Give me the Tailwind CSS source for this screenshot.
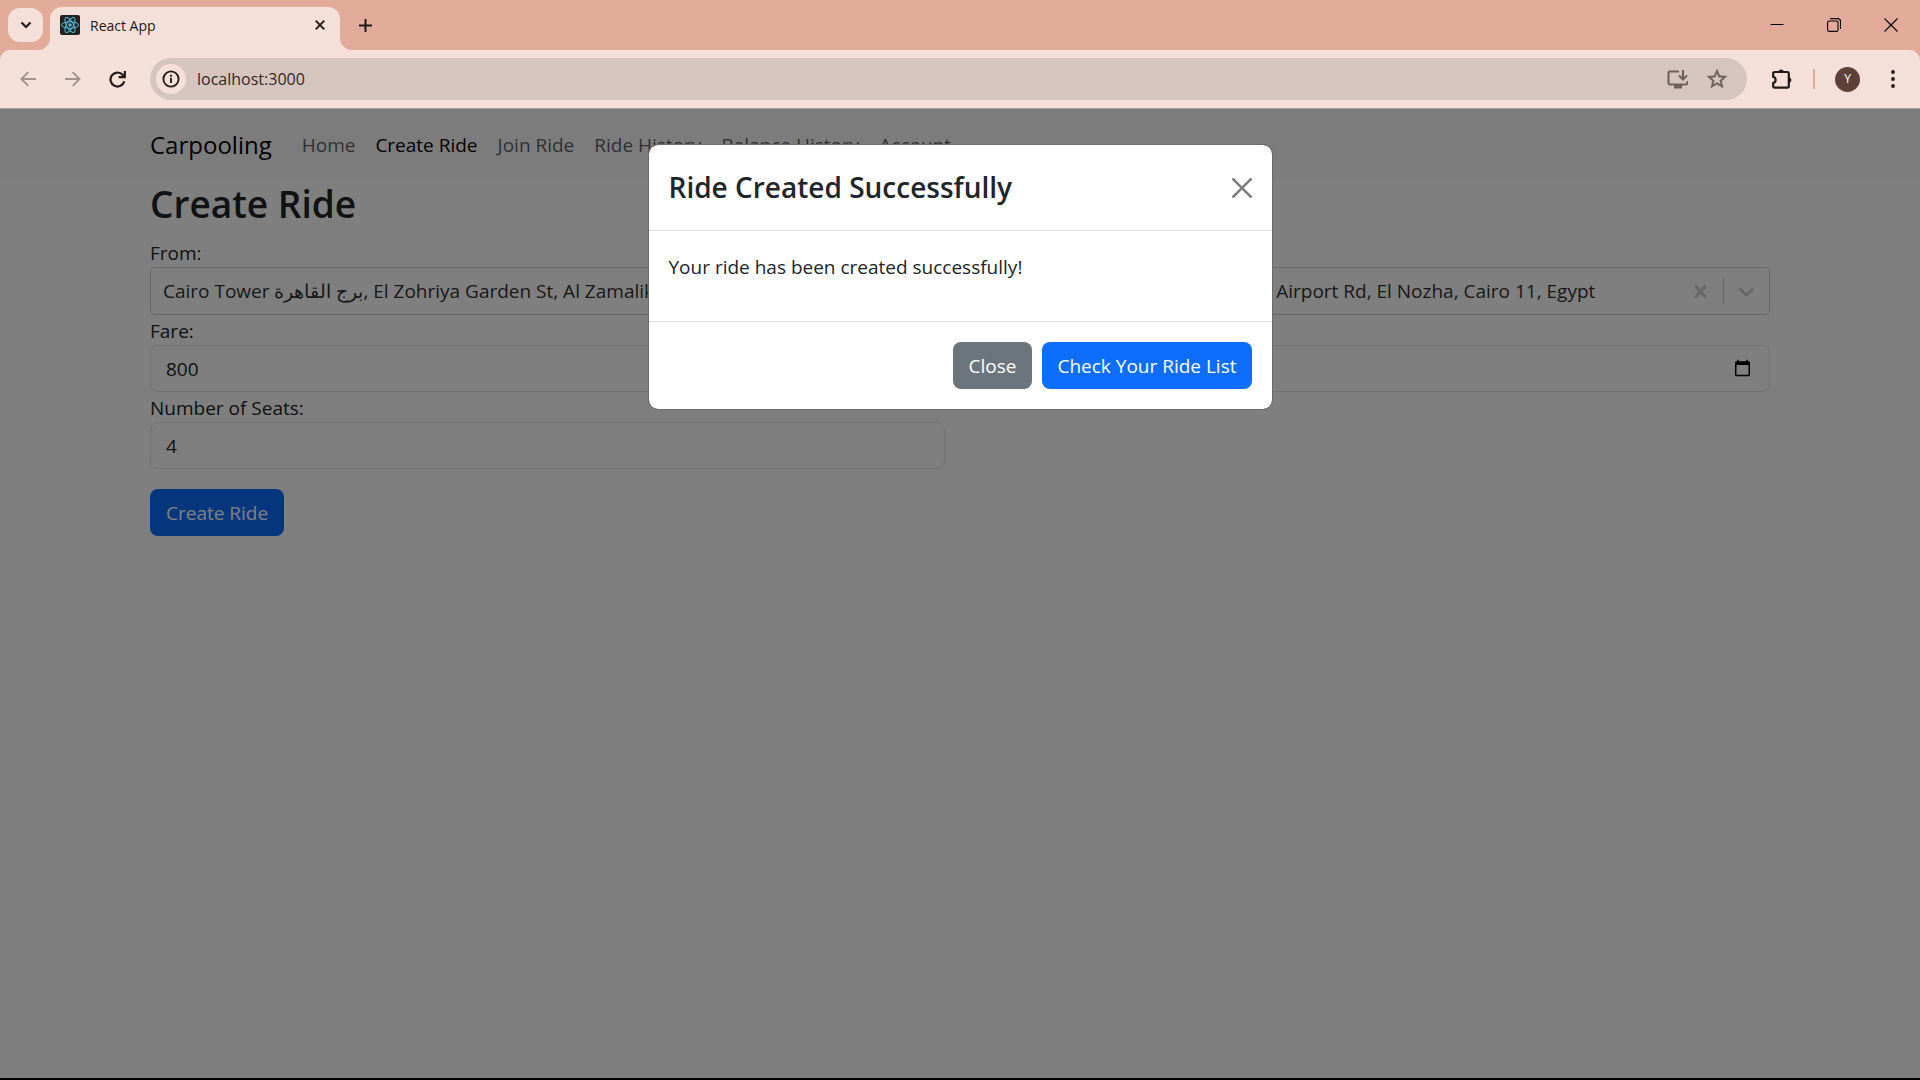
<!DOCTYPE html>
<html lang="en">
<head>
<meta charset="utf-8">
<meta name="viewport" content="width=device-width, initial-scale=1">
<title>React App</title>
<script src="https://cdn.jsdelivr.net/npm/@tailwindcss/browser@4"></script>
</head>
<body class="flex min-h-screen flex-col bg-[#e2ab99] font-['Open_Sans','Noto_Sans',sans-serif] text-[19px] leading-[30px] text-[#212529]">

<!-- Tab strip -->
<header class="flex h-[50px] shrink-0 text-[#1f1a19]">
  <button type="button" aria-label="Search tabs" class="mt-2 ml-2 flex h-[34px] w-[35px] items-center justify-center rounded-xl bg-[#f5e0d9]">
    <svg class="size-3" viewBox="0 0 12 12" fill="none" stroke="currentColor" stroke-width="2.2"><path d="M1.5 3.5 6 8l4.500-4.500"/></svg>
  </button>
  <div class="relative mt-[7px] ml-[7px] flex w-[290px] items-center rounded-t-xl bg-[#f5e0d9] px-[10px] pb-4">
    <svg class="absolute bottom-0 -left-3 size-3" viewBox="0 0 12 12" fill="#f5e0d9"><path d="M12 0v12H0A12 12 0 0 0 12 0z"/></svg>
    <svg class="absolute -right-3 bottom-0 size-3" viewBox="0 0 12 12" fill="#f5e0d9"><path d="M0 0v12h12A12 12 0 0 1 0 0z"/></svg>
    <svg class="mt-2 size-5" viewBox="0 0 20 20" fill="none" stroke="#53bdd9" stroke-width="1"><rect width="20" height="20" rx="2" fill="#222" stroke="none"/><ellipse cx="10" cy="10" rx="8.500" ry="3.300"/><ellipse cx="10" cy="10" rx="8.500" ry="3.300" transform="rotate(60 10 10)"/><ellipse cx="10" cy="10" rx="8.500" ry="3.300" transform="rotate(120 10 10)"/><circle cx="10" cy="10" r="1.700" fill="#53bdd9" stroke="none"/></svg>
    <span class="mt-[10px] ml-[10px] flex-1 text-sm">React App</span>
    <button type="button" aria-label="Close tab" class="mt-2 flex size-5 items-center justify-center">
      <svg class="size-[10px]" viewBox="0 0 10 10" fill="none" stroke="currentColor" stroke-width="1.900"><path d="m.7.700 8.600 8.600M9.300.700.700 9.300"/></svg>
    </button>
  </div>
  <button type="button" aria-label="New tab" class="ml-[10px] flex w-[30px] items-center justify-center">
    <svg class="size-[13px]" viewBox="0 0 13 13" fill="none" stroke="currentColor" stroke-width="2"><path d="M6.500 0v13M0 6.500h13"/></svg>
  </button>
  <div class="mr-px ml-auto flex text-black">
    <button type="button" aria-label="Minimize" class="flex w-[57px] items-center justify-center"><svg class="size-[14px]" viewBox="0 0 14 14" fill="none" stroke="currentColor"><path d="M.5 6.500h13"/></svg></button>
    <button type="button" aria-label="Restore" class="flex w-[57px] items-center justify-center"><svg class="size-[14px]" viewBox="0 0 14 14" fill="none" stroke="currentColor" stroke-width="1.100"><rect x=".6" y="3" width="10.400" height="10.400" rx="1.500"/><path d="M3 .6h7.500a3 3 0 0 1 3 3v7.400"/></svg></button>
    <button type="button" aria-label="Close window" class="flex w-[57px] items-center justify-center"><svg class="size-[14px]" viewBox="0 0 14 14" fill="none" stroke="currentColor" stroke-width="1.100"><path d="m.5.500 13 13M13.500.500l-13 13"/></svg></button>
  </div>
</header>

<!-- Toolbar -->
<div class="flex h-[58px] shrink-0 items-center rounded-t-[10px] bg-[#f5e0d9] pr-1 pl-[5px] text-[#1f1a19]">
  <button type="button" aria-label="Back" class="flex w-[45px] justify-center text-[#a0938e]"><svg class="size-[16px]" viewBox="0 0 16 16" fill="none" stroke="currentColor" stroke-width="1.900"><path d="M16 8H1.600M8.300 1.200 1.500 8l6.800 6.800"/></svg></button>
  <button type="button" aria-label="Forward" class="flex w-[45px] justify-center text-[#a0938e]"><svg class="size-[16px]" viewBox="0 0 16 16" fill="none" stroke="currentColor" stroke-width="1.900"><path d="M0 8h14.400M7.700 1.200 14.500 8l-6.800 6.800"/></svg></button>
  <button type="button" aria-label="Reload" class="flex w-[45px] justify-center"><svg class="size-[17px]" viewBox="0 0 17 17" fill="none" stroke="currentColor" stroke-width="2.200"><path d="M15.300 10.300A7 7 0 1 1 13.600 3.700L15.500 5.600"/><path d="M15.800 0v6.200H9.600"/></svg></button>
  <div class="ml-[10px] flex h-[42px] min-w-0 flex-1 items-center rounded-full bg-[#d6c5bf] pr-5 pl-[6px]">
    <button type="button" aria-label="View site information" class="flex size-[30px] items-center justify-center rounded-full bg-[#f5e0d9]"><svg class="size-[18px]" viewBox="0 0 18 18" fill="none" stroke="currentColor" stroke-width="1.900"><circle cx="9" cy="9" r="7.600"/><path d="M9 8v5M9 4.800v1.900"/></svg></button>
    <input type="text" aria-label="Address" value="localhost:3000" class="ml-[11px] min-w-0 flex-1 bg-transparent text-base text-[#2f2827] outline-none">
    <button type="button" aria-label="Install app" class="mr-[19px] text-[#6b605d]"><svg class="size-[21px]" viewBox="0 0 21 21" fill="none" stroke="currentColor" stroke-width="2.100"><path d="M12 2.500H3a1.500 1.500 0 0 0-1.500 1.500v10A1.500 1.500 0 0 0 3 15.500h16a1.500 1.500 0 0 0 1.500-1.500V12M16 1v9.300M12 6.600l4 4 4-4"/><path d="M7 16h8v3.500H7z" fill="currentColor" stroke="none"/></svg></button>
    <button type="button" aria-label="Bookmark this tab" class="text-[#6b605d]"><svg class="size-[20px]" viewBox="2 2 20 20" fill="currentColor" stroke="currentColor" stroke-width=".4"><path d="M22 9.240l-7.190-.62L12 2 9.190 8.630 2 9.240l5.460 4.730L5.820 21 12 17.270 18.180 21l-1.630-7.030L22 9.240zM12 15.400l-3.760 2.270 1-4.280-3.320-2.880 4.380-.38L12 6.100l1.710 4.040 4.380.38-3.320 2.880 1 4.280L12 15.400z"/></svg></button>
  </div>
  <button type="button" aria-label="Extensions" class="ml-3 flex w-[46px] justify-center"><svg class="size-[22px]" viewBox="0 0 22 22" fill="none" stroke="currentColor" stroke-width="2.200"><path d="M3.500 4h13A1.300 1.300 0 0 1 17.800 5.300v13A1.300 1.300 0 0 1 16.500 19.600h-13A1.300 1.300 0 0 1 2.200 18.300V15a3.200 3.200 0 0 0 0-6.200V5.300A1.300 1.300 0 0 1 3.500 4z"/><path d="M7.500 4a2.600 2.600 0 0 1 5.200 0zM17.800 9.400a2.500 2.500 0 0 1 0 5z" fill="currentColor" stroke="none"/></svg></button>
  <span class="ml-2 h-5 w-[2px] bg-[#e2ab99]"></span>
  <button type="button" aria-label="Profile" class="ml-5 flex size-[25px] items-center justify-center rounded-full bg-[#5d4037] text-xs text-white">Y</button>
  <button type="button" aria-label="Menu" class="ml-[10px] flex w-[46px] justify-center"><svg class="h-[18px] w-1" viewBox="0 0 4 18" fill="currentColor"><circle cx="2" cy="2" r="1.900"/><circle cx="2" cy="9" r="1.900"/><circle cx="2" cy="16" r="1.900"/></svg></button>
</div>

<!-- Page -->
<div class="relative flex-1 border-t border-b-2 border-t-[#a99f9b] border-b-black bg-white">
  <nav class="bg-[#f8f9fa]">
    <div class="mx-auto flex h-[70px] max-w-[1650px] items-center px-[15px] pt-px">
      <a href="#" class="mr-[30px] text-2xl text-black">Carpooling</a>
      <div class="flex gap-5 text-black/65">
        <a href="#">Home</a>
        <a href="#" class="text-black">Create Ride</a>
        <a href="#">Join Ride</a>
        <a href="#">Ride History</a>
        <a href="#">Balance History</a>
        <a href="#">Account</a>
      </div>
    </div>
  </nav>
  <main class="mx-auto max-w-[1650px] px-[15px]">
    <h1 class="mb-[10px] h-12 w-fit text-[37px] leading-[50px] font-semibold">Create Ride</h1>
    <form>
      <div class="grid grid-cols-2 gap-x-[30px]">
        <div>
          <label for="from" class="block h-[30px] w-fit leading-8">From:</label>
          <div class="flex h-12 items-center rounded-[5px] border border-[#ccc] pr-[10px] pl-3">
            <input id="from" role="combobox" aria-expanded="false" value="Cairo Tower برج القاهرة, El Zohriya Garden St, Al Zamalik, Cairo" class="min-w-0 flex-1 bg-transparent text-[#333] outline-none">
          </div>
        </div>
        <div>
          <label for="to" class="block h-[30px] w-fit leading-8">To:</label>
          <div class="flex h-12 items-center rounded-[5px] border border-[#ccc] pl-3 text-[#ccc]">
            <input id="to" role="combobox" aria-expanded="false" value="Cairo International Airport (CAI), Airport Rd, El Nozha, Cairo 11, Egypt" class="min-w-0 flex-1 bg-transparent text-[#333] outline-none">
            <button type="button" aria-label="Clear" class="flex w-[45px] justify-center"><svg class="size-[25px]" viewBox="0 0 20 20" fill="currentColor"><path d="M14.348 14.849c-0.469 0.469-1.229 0.469-1.697 0l-2.651-3.030-2.651 3.029c-0.469 0.469-1.229 0.469-1.697 0-0.469-0.469-0.469-1.229 0-1.697l2.758-3.150-2.759-3.152c-0.469-0.469-0.469-1.228 0-1.697s1.228-0.469 1.697 0l2.652 3.031 2.651-3.031c0.469-0.469 1.228-0.469 1.697 0s0.469 1.229 0 1.697l-2.758 3.152 2.758 3.150c0.469 0.469 0.469 1.229 0 1.698z"/></svg></button>
            <span class="h-[26px] w-px bg-[#ccc]"></span>
            <button type="button" aria-label="Open list" class="flex w-[45px] justify-center"><svg class="size-[25px]" viewBox="0 0 20 20" fill="currentColor"><path d="M4.516 7.548c0.436-0.446 1.043-0.481 1.576 0l3.908 3.747 3.908-3.747c0.533-0.481 1.141-0.446 1.574 0 0.436 0.445 0.408 1.197 0 1.615-0.406 0.418-4.695 4.502-4.695 4.502-0.217 0.223-0.502 0.335-0.787 0.335s-0.570-0.112-0.789-0.335c0 0-4.287-4.084-4.695-4.502s-0.436-1.170 0-1.615z"/></svg></button>
          </div>
        </div>
        <div>
          <label for="fare" class="block h-[30px] w-fit leading-8">Fare:</label>
          <input id="fare" type="text" inputmode="numeric" value="800" class="block h-[47px] w-full rounded-lg border border-[#dee2e6] px-[15px]">
        </div>
        <div>
          <label for="date" class="block h-[30px] w-fit leading-8">Date:</label>
          <input id="date" type="date" class="block h-[47px] w-full rounded-lg border border-[#dee2e6] px-[15px]">
        </div>
        <div>
          <label for="seats" class="block h-[30px] w-fit leading-8">Number of Seats:</label>
          <input id="seats" type="text" inputmode="numeric" value="4" class="block h-[47px] w-full rounded-lg border border-[#dee2e6] px-[15px]">
        </div>
      </div>
      <button type="submit" class="mt-5 h-[47px] rounded-lg bg-[#0d6efd] px-4 text-white">Create Ride</button>
    </form>
  </main>

  <!-- Modal over the dimmed page -->
  <div class="absolute inset-0 bg-black/50 pt-[35px]">
    <div role="dialog" aria-modal="true" aria-labelledby="dialog-title" class="mx-auto max-w-[625px] rounded-[10px] border border-[#6b6b6b] bg-white bg-clip-padding">
      <div class="flex h-[86px] items-center justify-between border-b border-[#dee2e6] px-5">
        <h2 id="dialog-title" class="text-[28px] leading-[45px] font-semibold">Ride Created Successfully</h2>
        <button type="button" aria-label="Close" class="text-[#7f7f7f]"><svg class="size-5" viewBox="0 0 16 16" fill="currentColor"><path d="M.293.293a1 1 0 0 1 1.414 0L8 6.586 14.293.293a1 1 0 1 1 1.414 1.414L9.414 8l6.293 6.293a1 1 0 0 1-1.414 1.414L8 9.414l-6.293 6.293a1 1 0 0 1-1.414-1.414L6.586 8 .293 1.707a1 1 0 0 1 0-1.414z"/></svg></button>
      </div>
      <div class="p-5">
        <p class="mb-5 h-[30px] leading-8">Your ride has been created successfully!</p>
      </div>
      <div class="flex justify-end gap-[10px] border-t border-[#dee2e6] p-5 text-white">
        <button type="button" class="h-[47px] rounded-lg bg-[#6c757d] px-4">Close</button>
        <button type="button" class="h-[47px] rounded-lg bg-[#0d6efd] px-[15px]">Check Your Ride List</button>
      </div>
    </div>
  </div>
</div>
</body>
</html>
